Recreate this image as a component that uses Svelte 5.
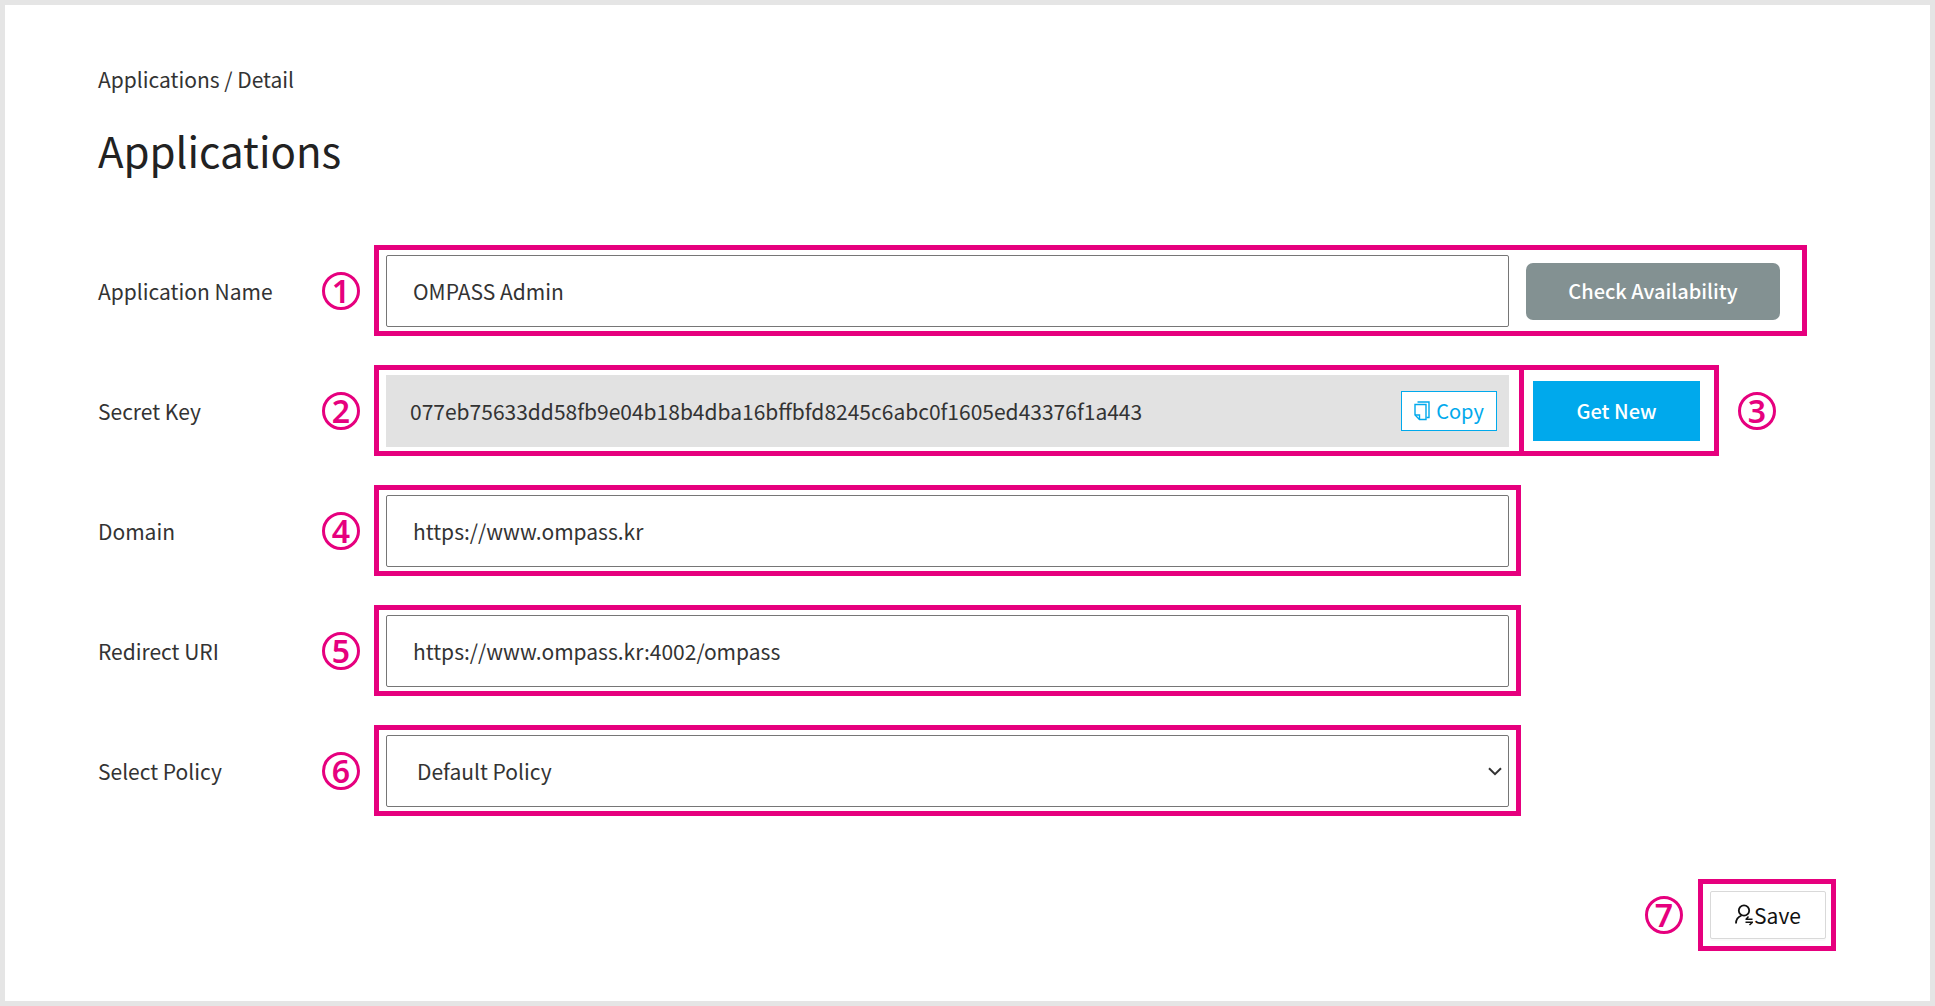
<script>
	let name = 'OMPASS Admin'
	let secretKey = '077eb75633dd58fb9e04b18b4dba16bffbfd8245c6abc0f1605ed43376f1a443'
	let domain = 'https://www.ompass.kr'
	let redirectUri = 'https://www.ompass.kr:4002/ompass'
	let policies = ['Default Policy']
	let policy = policies[0]

	const copyKey = () => navigator.clipboard.writeText(secretKey)
</script>

<main>
	<nav><a href="#applications">Applications</a> / Detail</nav>
	<h1>Applications</h1>

	<form on:submit|preventDefault>
		<div class="row">
			<label for="name">Application Name</label>
			<span class="badge">1</span>
			<div class="mark wide">
				<input id="name" class="field" type="text" bind:value={name} />
				<button type="button" class="check">Check Availability</button>
			</div>
		</div>

		<div class="row">
			<label for="secret">Secret Key</label>
			<span class="badge">2</span>
			<div class="keyRow">
				<div class="mark key">
					<div class="keyBox">
						<input id="secret" type="text" readonly value={secretKey} />
						<button type="button" class="copy" on:click={copyKey}>
							<svg width="16" height="20" viewBox="0 0 16 20" fill="none" stroke="currentColor">
								<path d="M1 3.5H12V18.5H5.5L1 14Z" stroke-width="1.4" />
								<path d="M1 14H5.5V18.5" stroke-width="1.4" />
								<path d="M3.5 1H15V16.5H12.5" stroke-width="1.4" />
							</svg>
							Copy
						</button>
					</div>
				</div>
				<div class="mark new">
					<button type="button" class="getNew">Get New</button>
				</div>
				<span class="badge">3</span>
			</div>
		</div>

		<div class="row">
			<label for="domain">Domain</label>
			<span class="badge">4</span>
			<div class="mark">
				<input id="domain" class="field" type="text" bind:value={domain} />
			</div>
		</div>

		<div class="row">
			<label for="redirect">Redirect URI</label>
			<span class="badge">5</span>
			<div class="mark">
				<input id="redirect" class="field" type="text" bind:value={redirectUri} />
			</div>
		</div>

		<div class="row">
			<label for="policy">Select Policy</label>
			<span class="badge">6</span>
			<div class="mark selectMark">
				<select id="policy" class="field" bind:value={policy}>
					{#each policies as item}
						<option value={item}>{item}</option>
					{/each}
				</select>
				<svg class="arrow" width="14" height="9" viewBox="0 0 14 9" fill="none" stroke="#333" stroke-width="2">
					<path d="M1 1.2L7 7.2L13 1.2" />
				</svg>
			</div>
		</div>

		<div class="actions">
			<span class="badge">7</span>
			<div class="mark saveMark">
				<button type="submit" class="save">
					<svg width="18" height="22" viewBox="0 0 18 22" fill="none" stroke="currentColor" stroke-width="1.8">
						<circle cx="9" cy="6.5" r="5.2" />
						<path d="M1 19.5C1 15.5 3 12.8 6.5 11.5" />
						<path d="M10.5 15.2H17.5M13.5 12.6L11 15.2M10.5 18.2H17.5L14.5 21" stroke-width="1.5" />
					</svg>Save
				</button>
			</div>
		</div>
	</form>
</main>

<style>
	:global(body) {
		margin: 0;
	}

	main {
		box-sizing: border-box;
		min-height: 100vh;
		padding: 58px 94px 48px 93px;
		border: 5px solid #e5e5e5;
		background-color: #fff;
		color: #333;
		font-family: 'Noto Sans CJK KR', 'Noto Sans', sans-serif;
		font-size: 21px;
		line-height: 32px;
	}

	nav a {
		color: inherit;
		text-decoration: none;
	}

	h1 {
		margin: 23px 0 63px;
		color: #222;
		font-size: 42px;
		font-weight: 400;
		line-height: 64px;
	}

	input,
	select,
	button {
		box-sizing: border-box;
		margin: 0;
		font: inherit;
		color: inherit;
	}

	button {
		padding: 0;
		border: none;
		cursor: pointer;
	}

	.row {
		display: grid;
		grid-template-columns: 224px 52px minmax(0, 1fr) 315px;
		align-items: center;
		margin-bottom: 29px;
	}

	.badge {
		box-sizing: border-box;
		flex: none;
		width: 38px;
		height: 38px;
		border: 3px solid #e6007e;
		border-radius: 50%;
		color: #e6007e;
		font-family: 'Noto Sans', sans-serif;
		font-size: 32px;
		font-weight: 600;
		line-height: 32px;
		text-align: center;
	}

	.mark {
		display: flex;
		align-items: center;
		padding: 5px 7px 4px;
		border: 5px solid #e6007e;
	}

	.wide {
		grid-column: 3 / 5;
		gap: 17px;
		margin-right: 29px;
		padding-right: 22px;
	}

	.field {
		flex: 1;
		min-width: 0;
		height: 72px;
		padding: 0 26px;
		border: 1px solid #767676;
		border-radius: 2px;
		background-color: #fff;
	}

	.selectMark {
		position: relative;
	}

	select.field {
		padding: 0 30px;
		appearance: none;
	}

	.arrow {
		position: absolute;
		right: 14px;
		pointer-events: none;
	}

	.check {
		width: 254px;
		height: 57px;
		border-radius: 7px;
		background-color: #839192;
		color: #fff;
		font-family: 'Noto Sans CJK KR Medium', 'Noto Sans CJK KR', sans-serif;
		font-size: 20px;
		font-weight: 500;
	}

	.keyRow {
		grid-column: 3 / 5;
		display: flex;
		align-items: center;
		margin-right: 60px;
	}

	.key {
		flex: 1;
		padding-right: 10px;
	}

	.keyBox {
		flex: 1;
		display: flex;
		align-items: center;
		height: 72px;
		padding: 0 12px 0 24px;
		background-color: #e2e2e2;
	}

	.keyBox input {
		flex: 1;
		min-width: 0;
		padding: 0;
		border: none;
		background: none;
	}

	.copy {
		display: flex;
		align-items: center;
		justify-content: center;
		gap: 6px;
		width: 96px;
		height: 40px;
		border: 1px solid #00a9ec;
		background-color: #fff;
		color: #00a9ec;
		font-size: 20px;
	}

	.new {
		align-self: stretch;
		margin: 0 19px 0 -5px;
		padding: 0 14px 0 9px;
	}

	.getNew {
		width: 167px;
		height: 60px;
		background-color: #00a9ec;
		color: #fff;
		font-family: 'Noto Sans CJK KR Medium', 'Noto Sans CJK KR', sans-serif;
		font-size: 20px;
		font-weight: 500;
	}

	.actions {
		display: flex;
		align-items: center;
		justify-content: flex-end;
		gap: 15px;
		margin-top: 63px;
	}

	.saveMark {
		padding: 7px 5px 7px 7px;
	}

	.save {
		display: flex;
		align-items: center;
		justify-content: center;
		gap: 1px;
		width: 116px;
		height: 48px;
		border: 1px solid #d9d9d9;
		border-radius: 2px;
		background-color: #fff;
		box-shadow: 0 2px 0 rgba(0, 0, 0, 0.02);
		color: #111;
	}
</style>
